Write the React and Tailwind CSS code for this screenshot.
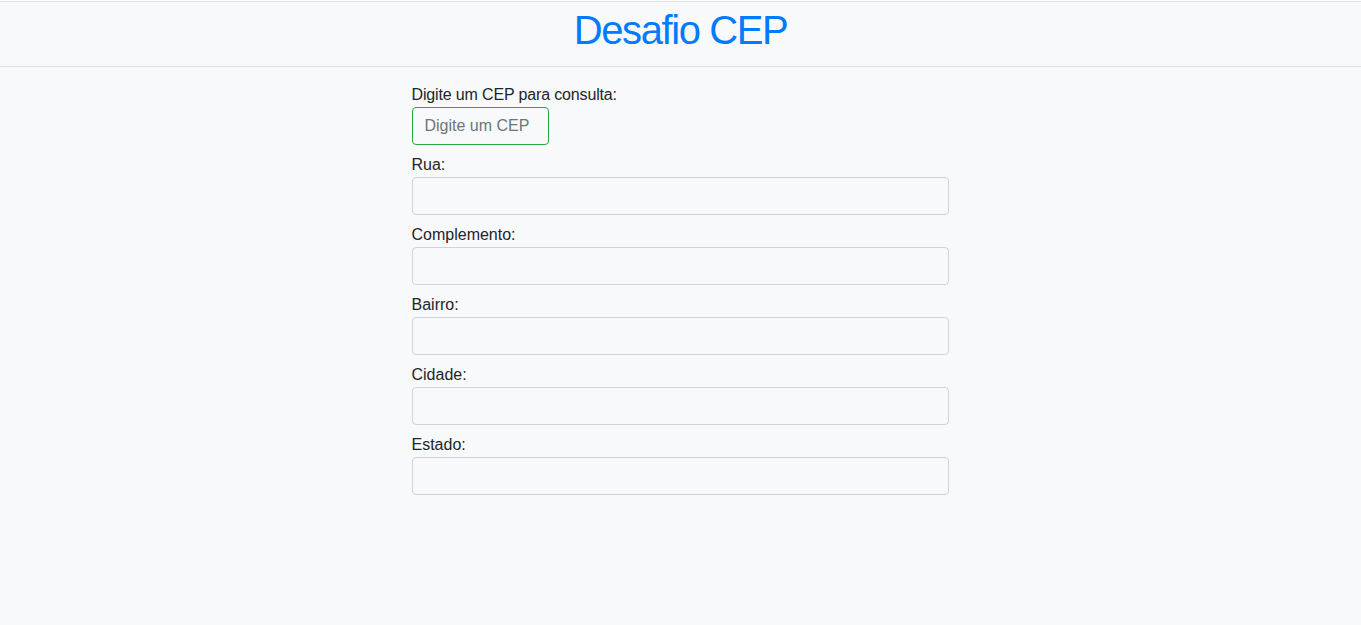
import React from "react";

const fields = ["Rua", "Complemento", "Bairro", "Cidade", "Estado"];

export default function App() {
  return (
    <div
      className="min-h-[625px] bg-[#f8f9fa] text-[#212529] text-base"
      style={{ fontFamily: '"Liberation Sans", Arial, sans-serif' }}
    >
      {/* Header */}
      <header className="mt-px border-y border-[#dee2e6] h-[66px] flex items-center justify-center">
        <h1 className="text-[40px] leading-[48px] tracking-[-1.4px] text-[#007bff] pb-2">Desafio CEP</h1>
      </header>

      {/* Form */}
      <div className="mx-auto w-[538px] pt-4">
        <label className="block leading-6 tracking-[-0.15px]">Digite um CEP para consulta:</label>
        <input
          type="text"
          placeholder="Digite um CEP"
          className="w-[137px] h-[38px] px-3 rounded border border-[#28a745] bg-[#f8f9fa] placeholder-[#6c757d] focus:outline-none"
        />
        {fields.map((f) => (
          <div key={f} className="mt-2">
            <label className="block leading-6">{f}:</label>
            <input
              type="text"
              className="w-[537px] h-[38px] px-3 rounded border border-[#ced4da] bg-[#f8f9fa] focus:outline-none"
            />
          </div>
        ))}
      </div>
    </div>
  );
}
